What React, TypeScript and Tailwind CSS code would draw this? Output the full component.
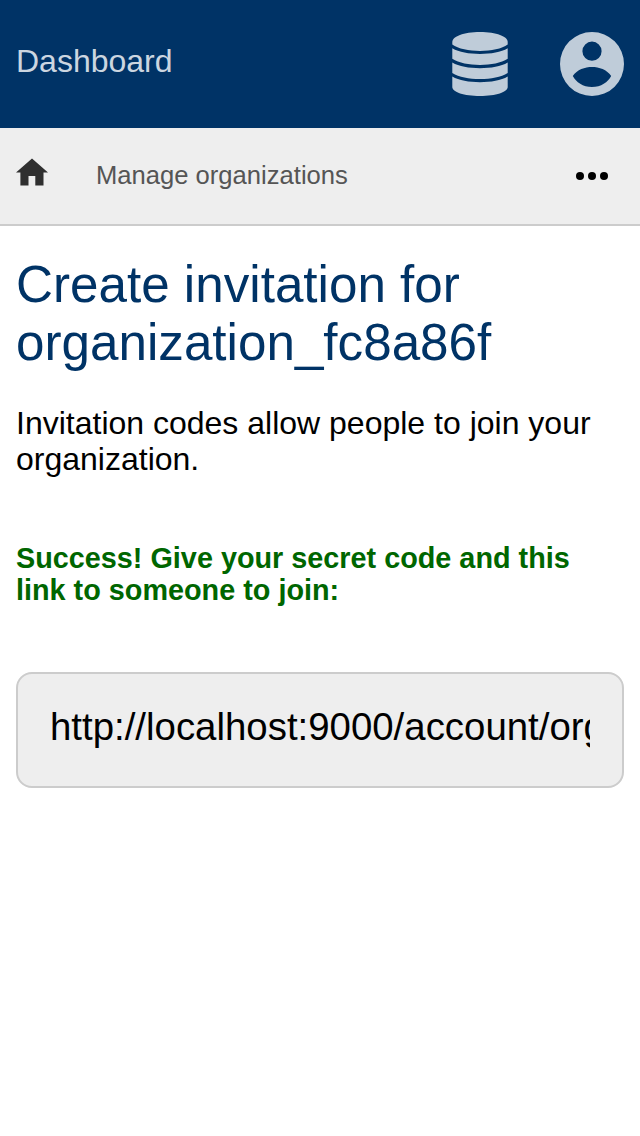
export default function App() {
  return (
    <div className="flex min-h-[1136px] w-full flex-col bg-white font-['Liberation_Sans',Arial,sans-serif] text-black">
      <header className="flex h-32 items-center justify-between bg-[#003366] px-4">
        <a className="pb-1.5 text-[32px] leading-9 text-[#ccd6e0]">Dashboard</a>
        <div className="flex items-center gap-12 text-[#bfccd9]">
          <svg className="h-16 w-16" viewBox="0 0 64 64" fill="currentColor">
            <path d="M32 0C15.500 0 4.300 4.500 4.300 10v2.600C10 17 21 19 32 19s22-2 27.700-6.400V10C59.700 4.500 48.500 0 32 0z" />
            <path d="M4.300 16.300C11 20.300 21 22 32 22s21-1.700 27.700-5.700V26.800C53 31 43 33 32 33S11 31 4.300 26.800z" />
            <path d="M4.300 30.500C11 34.500 21 36.200 32 36.200s21-1.700 27.700-5.700V41C53 45 43 47 32 47S11 45 4.300 41z" />
            <path d="M4.300 44.600C11 48.600 21 50.300 32 50.300s21-1.700 27.700-5.700V55C59.700 60 48 64 32 64S4.300 60 4.300 55z" />
          </svg>
          <svg className="h-16 w-16" viewBox="0 0 64 64" fill="currentColor" fillRule="evenodd">
            <path d="M32 0a32 32 0 1 0 0 64a32 32 0 1 0 0-64zM32 9.600a9.600 9.600 0 1 1 0 19.200a9.600 9.600 0 1 1 0-19.200zM32 55C23 55 16 50.200 12.800 44C17 37.500 25 34.900 32 34.900S47 37.500 51.200 44C48 50.200 41 55 32 55z" />
          </svg>
        </div>
      </header>
      <nav className="flex h-[98px] items-center border-b-2 border-[#cccccc] bg-[#eeeeee] px-4">
        <svg className="mb-2 h-8 w-8" viewBox="0 0 32 32" fill="#2f2f2f">
          <path d="M12.500 29.600v-9.600h6.800v9.600h8.200V16.400H32L16 2.400L0 16.400h4.400v13.200z" />
        </svg>
        <a className="mb-0.5 ml-12 text-[25.6px] leading-8 text-[#555555]">Manage organizations</a>
        <svg className="mr-4 ml-auto h-8 w-8" viewBox="0 0 32 32" fill="#000000">
          <circle cx="4" cy="16" r="4" />
          <circle cx="16" cy="16" r="4" />
          <circle cx="28" cy="16" r="4" />
        </svg>
      </nav>
      <main className="px-4 pt-[30px]">
        <h1 className="text-[51.2px] leading-[58px] text-[#003366]">
          Create invitation for<br />organization_fc8a86f
        </h1>
        <p className="mt-[33px] text-[32px] leading-9">
          Invitation codes allow people to join your organization.
        </p>
        <p className="mt-[65px] text-[28.8px] leading-8 font-bold text-[#006600]">
          Success! Give your secret code and this<br />link to someone to join:
        </p>
        <input
          aria-label="Invitation link"
          readOnly
          value="http://localhost:9000/account/organization"
          className="mt-[66px] h-[116px] w-full rounded-2xl border-2 border-[#cccccc] bg-[#eeeeee] px-8 pb-1.5 text-[38.4px] outline-none"
        />
      </main>
    </div>
  );
}
